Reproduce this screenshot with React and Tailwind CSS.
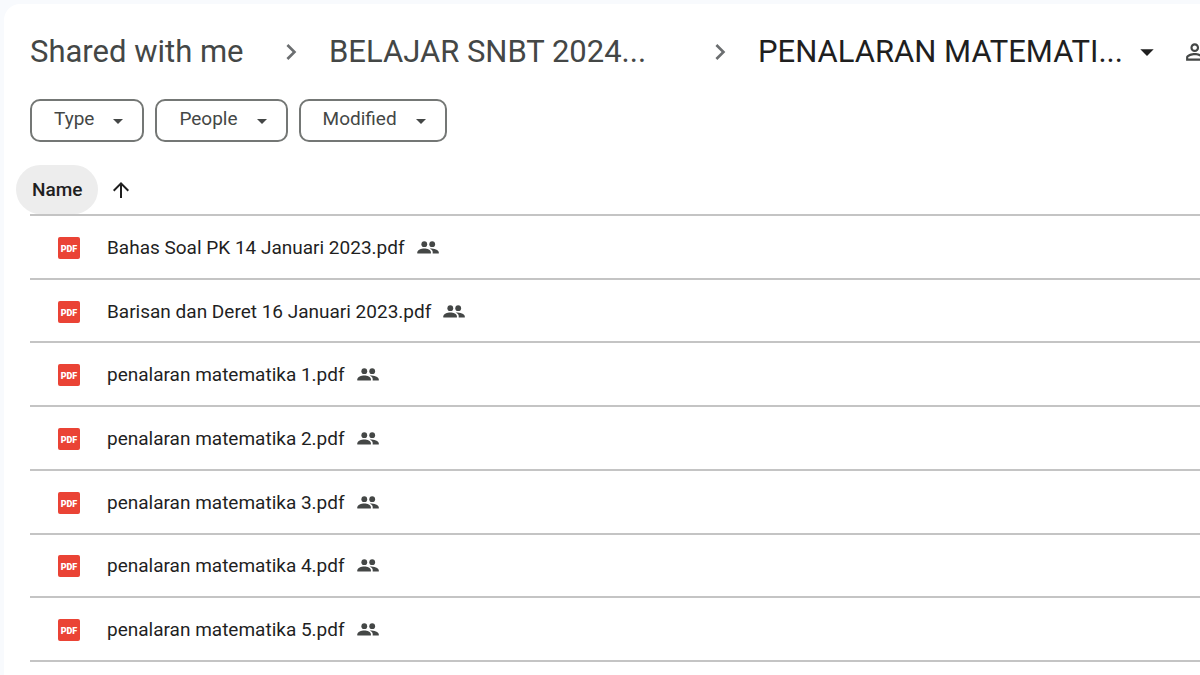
import { MdOutlinePeopleAlt, MdArrowDropDown, MdArrowUpward, MdChevronRight } from "react-icons/md";

const filters = ["Type", "People", "Modified"];

const files = [
  "Bahas Soal PK 14 Januari 2023.pdf",
  "Barisan dan Deret 16 Januari 2023.pdf",
  "penalaran matematika 1.pdf",
  "penalaran matematika 2.pdf",
  "penalaran matematika 3.pdf",
  "penalaran matematika 4.pdf",
  "penalaran matematika 5.pdf",
];

function PdfIcon() {
  return (
    <svg viewBox="0 0 22 22" className="size-[22px]" aria-hidden="true">
      <rect width="22" height="22" rx="2" fill="#ea4335" />
      <text x="11" y="14.5" textAnchor="middle" fill="#fff" className="font-[Roboto,sans-serif] text-[9px] font-black">PDF</text>
    </svg>
  );
}

function SharedIcon() {
  return (
    <svg viewBox="0 0 22 22" className="size-[22px]" fill="#444746" role="img" aria-label="Shared">
      <circle cx="7.3" cy="7.200" r="2.900" />
      <circle cx="15.2" cy="7.200" r="2.900" />
      <path d="M0.3 16.6v-1.4c0-2.3 4-3.7 7-3.7s6.6 1.4 6.6 3.7v1.4z" />
      <path d="M12.6 11.4c4.200-.1 9.200 1.300 9.200 3.900v1.300h-6.100v-1.500c0-1.500-1.100-2.800-3.100-3.700z" />
    </svg>
  );
}

function Separator() {
  return <MdChevronRight className="size-8 shrink-0 text-[#6b6e70]" aria-hidden="true" />;
}

export default function App() {
  return (
    <div className="min-h-screen bg-[#f8fafd] pt-1 pl-1 font-[Roboto,sans-serif] text-[#1f1f1f]">
      <main className="min-h-[671px] overflow-hidden rounded-tl-2xl bg-white pt-6">
        <nav aria-label="Breadcrumb" className="flex h-12 items-center gap-[22px] overflow-hidden pl-[26px] text-[31px] leading-10 whitespace-nowrap">
          <a href="#shared" className="min-w-[223px] shrink-0 text-[#444746]">Shared with me</a>
          <Separator />
          <a href="#belajar" className="min-w-[353px] shrink-0 text-[#444746]">BELAJAR SNBT 2024...</a>
          <Separator />
          <button type="button" className="flex shrink-0 items-center gap-2">
            PENALARAN MATEMATI...
            <MdArrowDropDown className="size-8" aria-hidden="true" />
          </button>
          <button type="button" aria-label="Share" className="shrink-0 text-[#444746]">
            <MdOutlinePeopleAlt className="size-[26px]" />
          </button>
        </nav>

        <div className="mt-[23px] flex gap-[11px] pl-[26px]">
          {filters.map((name) => (
            <button key={name} type="button" className="flex h-[43px] items-center gap-3 rounded-[10px] border-2 border-[#747775] pr-3 pl-[22px] text-[19px] leading-6 text-[#444746]">
              <span className="pb-1">{name}</span>
              <MdArrowDropDown className="size-6" aria-hidden="true" />
            </button>
          ))}
        </div>

        <div className="mt-[23px] pl-[26px]">
          <table className="h-[497px] w-full border-collapse text-[19px] leading-6">
            <thead>
              <tr className="h-[50px] border-b-2 border-[#c4c4c4]">
                <th scope="col" className="p-0 text-left font-medium">
                  <div className="-ml-[14px] flex items-center gap-[11px]">
                    <button type="button" className="h-[49px] rounded-full bg-[#ededed] px-4">Name</button>
                    <button type="button" aria-label="Sort ascending">
                      <MdArrowUpward className="size-6" />
                    </button>
                  </div>
                </th>
              </tr>
            </thead>
            <tbody>
              {files.map((name) => (
                <tr key={name} className="border-b-2 border-[#c4c4c4]">
                  <td className="p-0 pt-0.5 pl-7">
                    <div className="flex items-center">
                      <PdfIcon />
                      <a href="#file" className="mr-3 ml-[27px]">{name}</a>
                      <SharedIcon />
                    </div>
                  </td>
                </tr>
              ))}
            </tbody>
          </table>
        </div>
      </main>
    </div>
  );
}
